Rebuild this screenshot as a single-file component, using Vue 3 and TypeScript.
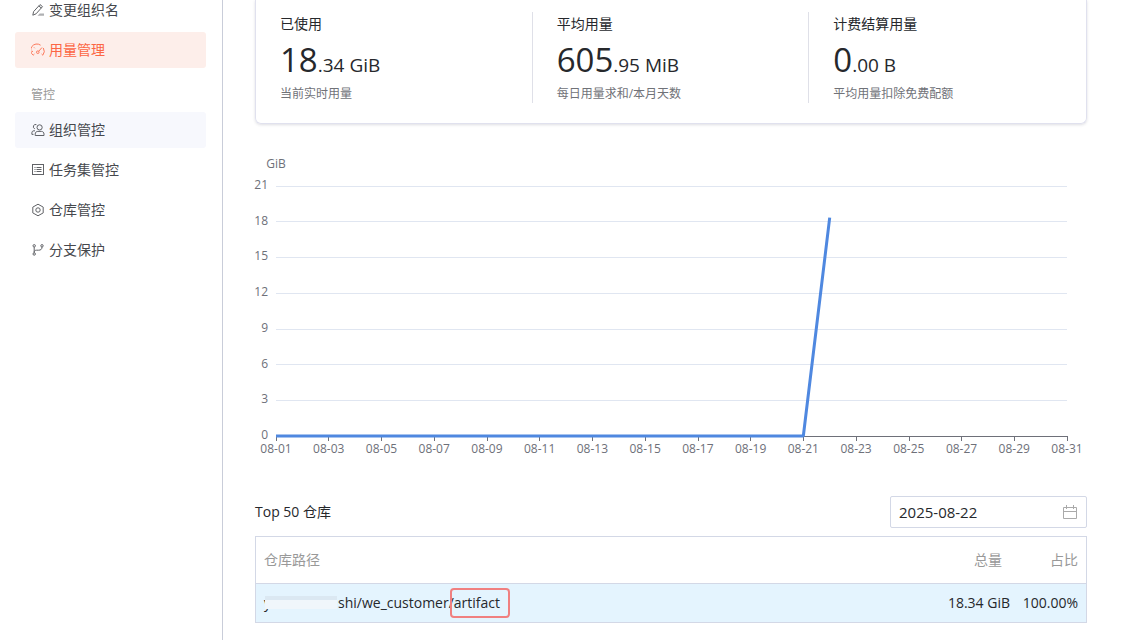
<script setup lang="ts">
import { computed, onBeforeUnmount, onMounted, ref } from 'vue'

interface NavItem {
  label: string
  icon: 'edit' | 'gauge' | 'users' | 'list' | 'hex' | 'branch'
  state?: 'active' | 'hover'
}

const accountItems: NavItem[] = [
  { label: '变更组织名', icon: 'edit' },
  { label: '用量管理', icon: 'gauge', state: 'active' },
]
const controlItems: NavItem[] = [
  { label: '组织管控', icon: 'users', state: 'hover' },
  { label: '任务集管控', icon: 'list' },
  { label: '仓库管控', icon: 'hex' },
  { label: '分支保护', icon: 'branch' },
]
const groups = [
  { title: '', items: accountItems },
  { title: '管控', items: controlItems },
]

const stats = [
  { title: '已使用', whole: '18', rest: '.34 GiB', note: '当前实时用量' },
  { title: '平均用量', whole: '605', rest: '.95 MiB', note: '每日用量求和/本月天数' },
  { title: '计费结算用量', whole: '0', rest: '.00 B', note: '平均用量扣除免费配额' },
]

const date = ref('2025-08-22')

const chartBox = ref<HTMLElement | null>(null)
const chartWidth = ref(832)
const plot = { left: 21, right: 20, top: 38, height: 250 }
const maxValue = 21
const dayCount = 31
const usage: number[] = [...Array(21).fill(0), 18.34]

const plotWidth = computed(() => chartWidth.value - plot.left - plot.right)
const xOf = (day: number) => plot.left + (plotWidth.value * (day - 1)) / (dayCount - 1)
const yOf = (value: number) => plot.top + plot.height * (1 - value / maxValue)
// Snaps a coordinate to a pixel centre so that hairlines stay sharp.
const crisp = (n: number) => {
  const doubled = Math.round(n * 2)
  return (doubled % 2 ? doubled : doubled + 1) / 2
}

const yTicks = [0, 3, 6, 9, 12, 15, 18, 21]
const xTicks = Array.from({ length: 16 }, (_, i) => i * 2 + 1)
const dayLabel = (day: number) => `08-${String(day).padStart(2, '0')}`
const linePoints = computed(() => usage.map((v, i) => `${xOf(i + 1)},${yOf(v)}`).join(' '))

let observer: ResizeObserver | undefined
onMounted(() => {
  const box = chartBox.value
  if (!box) return
  chartWidth.value = box.clientWidth
  observer = new ResizeObserver(() => {
    chartWidth.value = box.clientWidth
  })
  observer.observe(box)
})
onBeforeUnmount(() => observer?.disconnect())
</script>

<template>
  <div class="page">
    <nav class="sidebar">
      <section v-for="(group, g) in groups" :key="g" class="group">
        <h2 v-if="group.title" class="group-title">{{ group.title }}</h2>
        <a v-for="item in group.items" :key="item.label" href="#" class="nav-item" :class="item.state">
          <svg class="icon" viewBox="0 0 14 14" aria-hidden="true">
            <g v-if="item.icon === 'edit'">
              <path d="M1.8 12.2l.8-3.6L9 1.6l2.5 2-6.4 7.2z M7.8 3l2.5 2" />
              <path class="solid" d="M6.5 12.7l2.2-2.2h4.3v2.2z" />
            </g>
            <g v-else-if="item.icon === 'gauge'">
              <path d="M2.2 12.2A6.2 6.2 0 0 1 9.6 2.2M12.3 5A6.2 6.2 0 0 1 11.8 12.2M2.2 12.2l1.2-1.2M11.8 12.2l-1.2-1.2M3 4.4l.8.8M.8 8.4h1.2" />
              <circle cx="6.8" cy="9.2" r="1.3" />
              <path d="M7.7 8.3l3.3-3.8" />
            </g>
            <g v-else-if="item.icon === 'users'">
              <circle cx="8.6" cy="4.4" r="2.6" />
              <path d="M4.2 12.5v-1.4c0-1.6 1-2.7 2.6-2.7h3.6c1.6 0 2.6 1.1 2.6 2.7v1.4z" />
              <path d="M5.4 1.6a2.2 2.2 0 0 0-1.6 4.2M4 7.8H3C1.6 7.8.9 8.6.9 9.8v1.6h1.6" />
            </g>
            <g v-else-if="item.icon === 'list'">
              <rect x="1.5" y="1.5" width="11" height="10" />
              <path d="M3.5 4.5h1M5.5 4.5h5M3.5 6.5h1M5.5 6.5h5M3.5 8.5h1M5.5 8.5h5" />
            </g>
            <g v-else-if="item.icon === 'hex'">
              <path d="M7 1.2l5.2 2.9v5.8L7 12.8 1.8 9.9V4.1z" />
              <circle cx="7" cy="7" r="2.2" />
            </g>
            <g v-else>
              <circle cx="3.2" cy="2.8" r="1.2" />
              <circle cx="3.2" cy="11" r="1.2" />
              <circle cx="11" cy="2.8" r="1.2" />
              <path d="M3.2 4v5.8M11 4c0 2.2-1.2 3.2-3.4 3.2H5.4c-1.4 0-2.2.8-2.2 2.2" />
            </g>
          </svg>
          <span>{{ item.label }}</span>
        </a>
      </section>
    </nav>

    <main class="content">
      <section class="stats">
        <div v-for="stat in stats" :key="stat.title" class="stat">
          <div class="stat-title">{{ stat.title }}</div>
          <div class="stat-value"><span class="whole">{{ stat.whole }}</span>{{ stat.rest }}</div>
          <div class="stat-note">{{ stat.note }}</div>
        </div>
      </section>

      <div ref="chartBox" class="chart">
        <svg class="chart-svg" role="img" aria-label="GiB">
          <text class="label" text-anchor="middle" :x="plot.left" y="20">GiB</text>
          <g v-for="v in yTicks" :key="v">
            <line v-if="v > 0" class="grid" :x1="plot.left" :x2="chartWidth - plot.right" :y1="crisp(yOf(v))" :y2="crisp(yOf(v))" />
            <text class="label" text-anchor="end" :x="plot.left - 8" :y="Math.round(yOf(v)) + 3">{{ v }}</text>
          </g>
          <line class="axis" :x1="plot.left" :x2="chartWidth - plot.right + 1" :y1="crisp(yOf(0))" :y2="crisp(yOf(0))" />
          <g v-for="d in xTicks" :key="d">
            <line class="axis" :x1="crisp(xOf(d))" :x2="crisp(xOf(d))" :y1="yOf(0)" :y2="yOf(0) + 5" />
            <text class="label" text-anchor="middle" :x="xOf(d)" :y="yOf(0) + 17">{{ dayLabel(d) }}</text>
          </g>
          <polyline class="series" :points="linePoints" />
        </svg>
      </div>

      <div class="toolbar">
        <label class="toolbar-title" for="usage-date">Top 50 仓库</label>
        <div class="date-box">
          <input id="usage-date" v-model="date" class="date-input" type="text" />
          <svg class="calendar" viewBox="0 0 16 16" aria-hidden="true">
            <path d="M1.5 3.5h13v11h-13zM1.5 7.5h13M4.5 1v4M11.5 1v4" />
          </svg>
        </div>
      </div>

      <table class="table">
        <thead>
          <tr>
            <th class="path">仓库路径</th>
            <th class="num">总量</th>
            <th class="ratio">占比</th>
          </tr>
        </thead>
        <tbody>
          <tr>
            <td class="path">
              <div class="repo">
                <span class="masked">y</span><span>shi/we_customer/</span><span class="marked">artifact</span>
              </div>
            </td>
            <td class="num">18.34 GiB</td>
            <td class="ratio">100.00%</td>
          </tr>
        </tbody>
      </table>
    </main>
  </div>
</template>

<style>
body {
  background: #fff;
}
</style>

<style scoped>
.page {
  display: flex;
  min-height: 100vh;
  box-sizing: border-box;
  overflow: hidden;
  color: #26282c;
  font: 14px/20px "Open Sans", "Noto Sans CJK SC", sans-serif;
}
.sidebar {
  box-sizing: border-box;
  flex: 0 0 223px;
  padding: 0 16px 0 15px;
  border-right: 1px solid #c9cdd9;
}
.group {
  display: flex;
  flex-direction: column;
  gap: 4px;
}
.group:first-child {
  margin-top: -8px;
}
.group-title {
  margin: 18px 0 4px;
  padding-left: 16px;
  color: #999;
  font-size: 12px;
  font-weight: 400;
  line-height: 18px;
}
.nav-item {
  display: flex;
  align-items: center;
  gap: 4px;
  height: 36px;
  padding-left: 16px;
  border-radius: 3px;
  color: #46484d;
  text-decoration: none;
}
.nav-item.active {
  background: #fdeeea;
  color: #fc6644;
}
.nav-item.hover {
  background: #f7f8fd;
}
.icon {
  width: 14px;
  height: 14px;
  fill: none;
  stroke: currentColor;
  stroke-width: 1;
  opacity: 0.85;
}
.solid {
  fill: currentColor;
  stroke: none;
  opacity: 0.5;
}
.content {
  flex: 1;
  min-width: 0;
  padding: 0 37px 0 32px;
}
.stats {
  display: grid;
  grid-template-columns: repeat(3, 1fr);
  padding: 12px 0 20px;
  border: 1px solid #e0e1ee;
  border-top: 0;
  border-radius: 0 0 6px 6px;
  box-shadow: 0 1px 3px rgba(50, 50, 80, 0.16);
}
.stat {
  height: 91px;
  padding-left: 24px;
  border-right: 1px solid #dfe0e8;
}
.stat:last-child {
  border-right: 0;
}
.stat-title {
  line-height: 24px;
}
.stat-value {
  height: 48px;
  font-size: 19px;
  line-height: 48px;
  white-space: nowrap;
}
.whole {
  font-size: 33px;
}
.stat-note {
  color: #707278;
  font-size: 12px;
  line-height: 20px;
}
.chart {
  margin-top: 24px;
}
.chart-svg {
  display: block;
  width: 100%;
  height: 324px;
  overflow: visible;
}
.label {
  fill: #6e7079;
  font-size: 12px;
}
.grid {
  stroke: #e0e6f1;
}
.axis {
  stroke: #6e7079;
}
.series {
  fill: none;
  stroke: #4f88e0;
  stroke-width: 3;
  stroke-linejoin: bevel;
}
.toolbar {
  display: flex;
  align-items: center;
  justify-content: space-between;
  margin-top: 24px;
}
.date-box {
  display: flex;
  align-items: center;
  box-sizing: border-box;
  width: 197px;
  height: 32px;
  padding: 0 8px;
  border: 1px solid #d3d8e6;
  border-radius: 2px;
}
.date-input {
  flex: 1;
  min-width: 0;
  padding: 0;
  border: 0;
  outline: 0;
  background: none;
  color: inherit;
  font: inherit;
  font-size: 15px;
}
.calendar {
  width: 16px;
  height: 16px;
  fill: none;
  stroke: #aaa;
}
.table {
  width: 100%;
  margin-top: 8px;
  border: 1px solid #d3d8e6;
  border-spacing: 0;
  border-collapse: separate;
}
.table th,
.table td {
  box-sizing: border-box;
  padding: 0 8px;
  text-align: right;
  white-space: nowrap;
}
.table th {
  height: 47px;
  border-bottom: 1px solid #d3d8e6;
  color: #999;
  font-weight: 400;
}
.table td {
  height: 38px;
  background: #e4f4fe;
}
.table .path {
  text-align: left;
}
.table td.num {
  padding-right: 0;
}
.table .ratio {
  width: 76px;
}
.repo {
  display: flex;
  align-items: center;
}
.masked {
  position: relative;
  width: 74px;
}
.masked::after {
  content: "";
  position: absolute;
  inset: 3px 1px 4px 1px;
  background: linear-gradient(#dbe8f2 4px, #f0f6fb 4px);
}
.marked {
  position: relative;
}
.marked::after {
  content: "";
  position: absolute;
  inset: -5px -10px -5px -4px;
  border: 2px solid #f08080;
  border-radius: 4px;
}
</style>
